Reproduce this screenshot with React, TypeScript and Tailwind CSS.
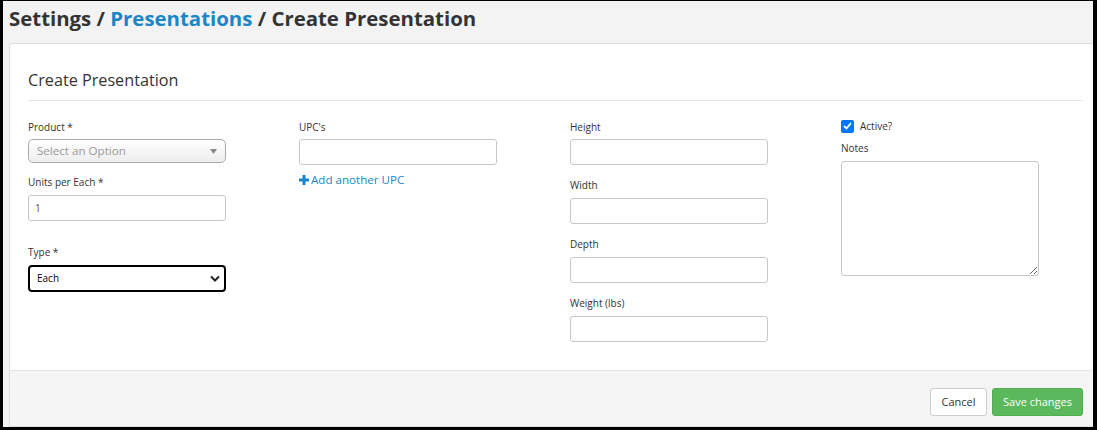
import React from "react";

const font = { fontFamily: '"Open Sans", "Liberation Sans", sans-serif' };

function Label({ children, className = "" }: { children: React.ReactNode; className?: string }) {
  return <div className={`text-[10px] leading-[14px] text-[#333] ${className}`}>{children}</div>;
}

function TextInput({ value = "", className = "" }: { value?: string; className?: string }) {
  return (
    <div className={`w-[198px] h-[26px] border border-[#c8c8c8] rounded-[3px] bg-white flex items-center px-[6px] text-[10px] text-[#555] ${className}`}>
      {value}
    </div>
  );
}

export default function App() {
  return (
    <div style={font} className="w-[1097px] h-[430px] bg-black pt-[1px] pl-[3px] pr-[4px] pb-[3px]">
      <div className="w-full h-full bg-[#f3f3f3] overflow-hidden flex flex-col">
        <div className="h-[42px] pl-[6px] flex items-start pt-[3px]">
          <div className="text-[20.4px] leading-[28px] font-bold text-[#333] whitespace-nowrap">
            Settings / <span className="text-[#1a86c8]">Presentations</span> / Create Presentation
          </div>
        </div>
        <div className="ml-[6px] w-[1093px] flex-1 bg-white border border-[#dcdcdc] rounded-t-[3px] flex flex-col">
          <div className="h-[326px] px-[18px] pt-[25px]">
            <div className="text-[16.2px] leading-[22px] text-[#333] pb-[9px] border-b border-[#e5e5e5]">
              Create Presentation
            </div>
            <div className="flex pt-[19px]">
              {/* col 1 */}
              <div className="w-[271px] shrink-0 flex flex-col">
                <Label className="text-[#6b3a22]">Product *</Label>
                <div className="mt-[5px] w-[198px] h-[24px] border border-[#aaa] rounded-[5px] bg-gradient-to-b from-white to-[#eeeeee] flex items-center justify-between px-[8px]">
                  <span className="text-[11.6px] text-[#999]">Select an Option</span>
                  <svg width="7" height="5" viewBox="0 0 7 5"><path d="M0 0 L7 0 L3.5 5 Z" fill="#888" /></svg>
                </div>
                <Label className="mt-[12px]">Units per Each *</Label>
                <TextInput value="1" className="mt-[6px]" />
                <Label className="mt-[24px] text-[#3a2a3a]">Type *</Label>
                <div className="mt-[6px] w-[198px] h-[27px] border-2 border-black rounded-[4px] bg-white flex items-center justify-between pl-[7px] pr-[4px]">
                  <span className="text-[10px] text-black">Each</span>
                  <svg width="10" height="7" viewBox="0 0 10 7"><path d="M1 1.5 L5 5.5 L9 1.5" stroke="#222" strokeWidth="2" fill="none" /></svg>
                </div>
              </div>
              {/* col 2 */}
              <div className="w-[271px] shrink-0 flex flex-col">
                <Label>UPC's</Label>
                <TextInput className="mt-[5px]" />
                <div className="mt-[7px] flex items-center gap-[2px] text-[11.6px] leading-[16px] text-[#1a86c8]">
                  <svg width="10" height="10" viewBox="0 0 10 10"><path d="M3.5 0h3v3.5H10v3H6.5V10h-3V6.5H0v-3h3.5z" fill="#1a86c8" /></svg>
                  <span>Add another UPC</span>
                </div>
              </div>
              {/* col 3 */}
              <div className="w-[271px] shrink-0 flex flex-col">
                <Label>Height</Label>
                <TextInput className="mt-[5px]" />
                <Label className="mt-[13px]">Width</Label>
                <TextInput className="mt-[6px]" />
                <Label className="mt-[13px]">Depth</Label>
                <TextInput className="mt-[6px]" />
                <Label className="mt-[13px]">Weight (lbs)</Label>
                <TextInput className="mt-[6px]" />
              </div>
              {/* col 4 */}
              <div className="w-[271px] shrink-0 flex flex-col -mt-[1px]">
                <div className="flex items-center gap-[6px]">
                  <div className="w-[13px] h-[13px] rounded-[2px] bg-[#0075ff] flex items-center justify-center">
                    <svg width="9" height="8" viewBox="0 0 9 8"><path d="M1 4 L3.5 6.5 L8 1" stroke="white" strokeWidth="1.8" fill="none" /></svg>
                  </div>
                  <Label>Active?</Label>
                </div>
                <Label className="mt-[8px]">Notes</Label>
                <textarea className="mt-[6px] w-[198px] h-[115px] border border-[#c8c8c8] rounded-[3px] bg-white outline-none" />
              </div>
            </div>
          </div>
          <div className="flex-1 bg-[#f5f5f5] border-t border-[#e5e5e5] flex items-start justify-end pr-[18px] pt-[17px] gap-[5px]">
            <div className="h-[28px] w-[57px] justify-center border border-[#ccc] rounded-[3px] bg-white flex items-center text-[11px] text-[#333]">
              Cancel
            </div>
            <div className="h-[28px] w-[91px] justify-center border border-[#4cae4c] rounded-[3px] bg-[#5cb85c] flex items-center text-[11px] text-white">
              Save changes
            </div>
          </div>
        </div>
      </div>
    </div>
  );
}
